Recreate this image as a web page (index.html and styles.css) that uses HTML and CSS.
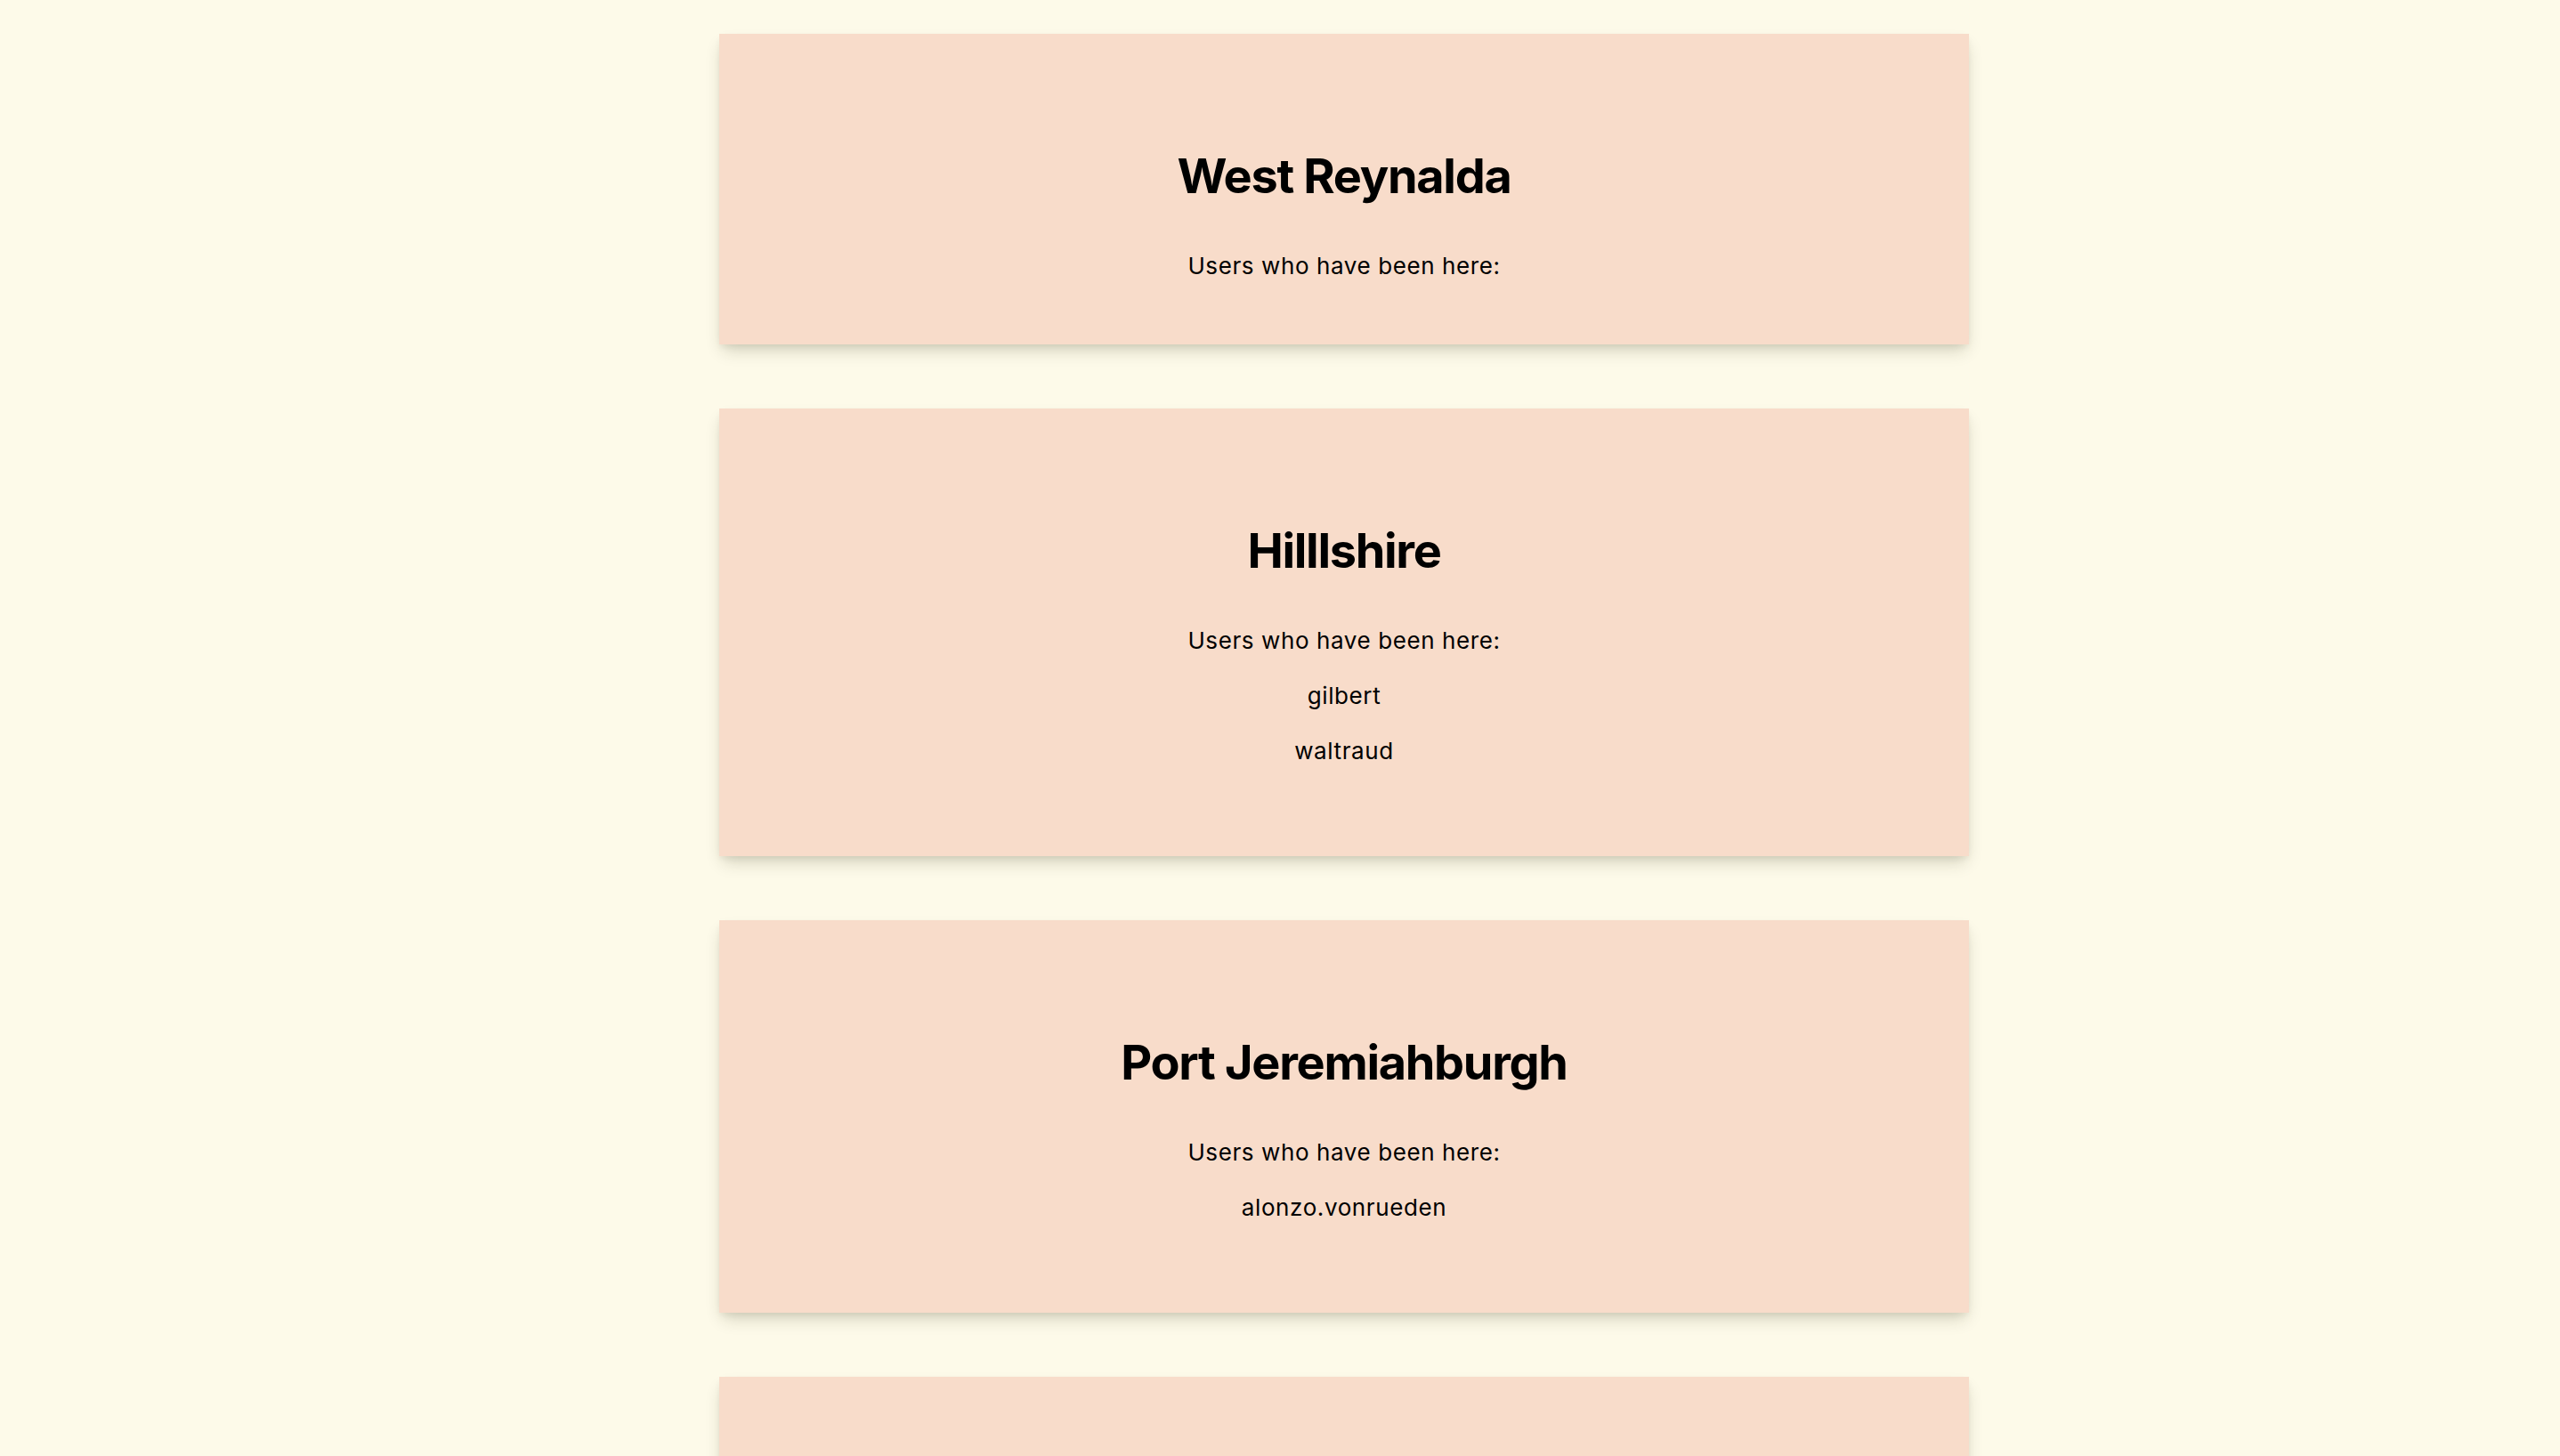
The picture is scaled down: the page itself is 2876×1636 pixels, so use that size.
FILE: index.html
```html
<!DOCTYPE html>
<html lang="en">
<head>
<meta charset="utf-8">
<title>Places</title>
<link rel="stylesheet" href="styles.css">
</head>
<body>
<div class="layout">
  <aside class="side"></aside>
  <main class="main">
    <section class="card">
      <h1 class="title">West Reynalda</h1>
      <p class="sub">Users who have been here:</p>
    </section>
    <section class="card">
      <h1 class="title">Hilllshire</h1>
      <p class="sub">Users who have been here:</p>
      <div class="users">
        <p class="user">gilbert</p>
        <p class="user">waltraud</p>
      </div>
    </section>
    <section class="card">
      <h1 class="title">Port Jeremiahburgh</h1>
      <p class="sub">Users who have been here:</p>
      <div class="users">
        <p class="user">alonzo.vonrueden</p>
      </div>
    </section>
    <section class="card">
      <h1 class="title">East Maximillia</h1>
      <p class="sub">Users who have been here:</p>
    </section>
  </main>
</div>
</body>
</html>
```
FILE: styles.css
```css
html, body {
  margin: 0;
  padding: 0;
  background: #fdfae9;
}
body {
  font-family: Inter, "Noto Sans", "Liberation Sans", sans-serif;
  color: #000;
}
.layout {
  display: flex;
  min-height: 100vh;
}
.side {
  flex: 0 0 144px;
}
.main {
  flex: 1 1 auto;
  display: flex;
  flex-direction: column;
  align-items: center;
  gap: 72px;
  padding-top: 38px;
  padding-bottom: 72px;
}
.card {
  width: 1404px;
  box-sizing: border-box;
  background: #f8dcca;
  padding: 127px 40px 72px;
  text-align: center;
  box-shadow: 0 10px 18px -4px rgba(40, 40, 10, 0.2), 0 4px 8px -2px rgba(40, 40, 10, 0.08);
}
.title {
  margin: 0;
  font-size: 54px;
  line-height: 65px;
  font-weight: 700;
  letter-spacing: -1.3px;
}
.sub {
  margin: 53px 0 0;
  font-size: 26px;
  line-height: 32px;
  letter-spacing: 0.6px;
}
.users {
  margin-bottom: 30px;
}
.user {
  margin: 30px 0 0;
  font-size: 26px;
  line-height: 32px;
  letter-spacing: 0.6px;
}
```
